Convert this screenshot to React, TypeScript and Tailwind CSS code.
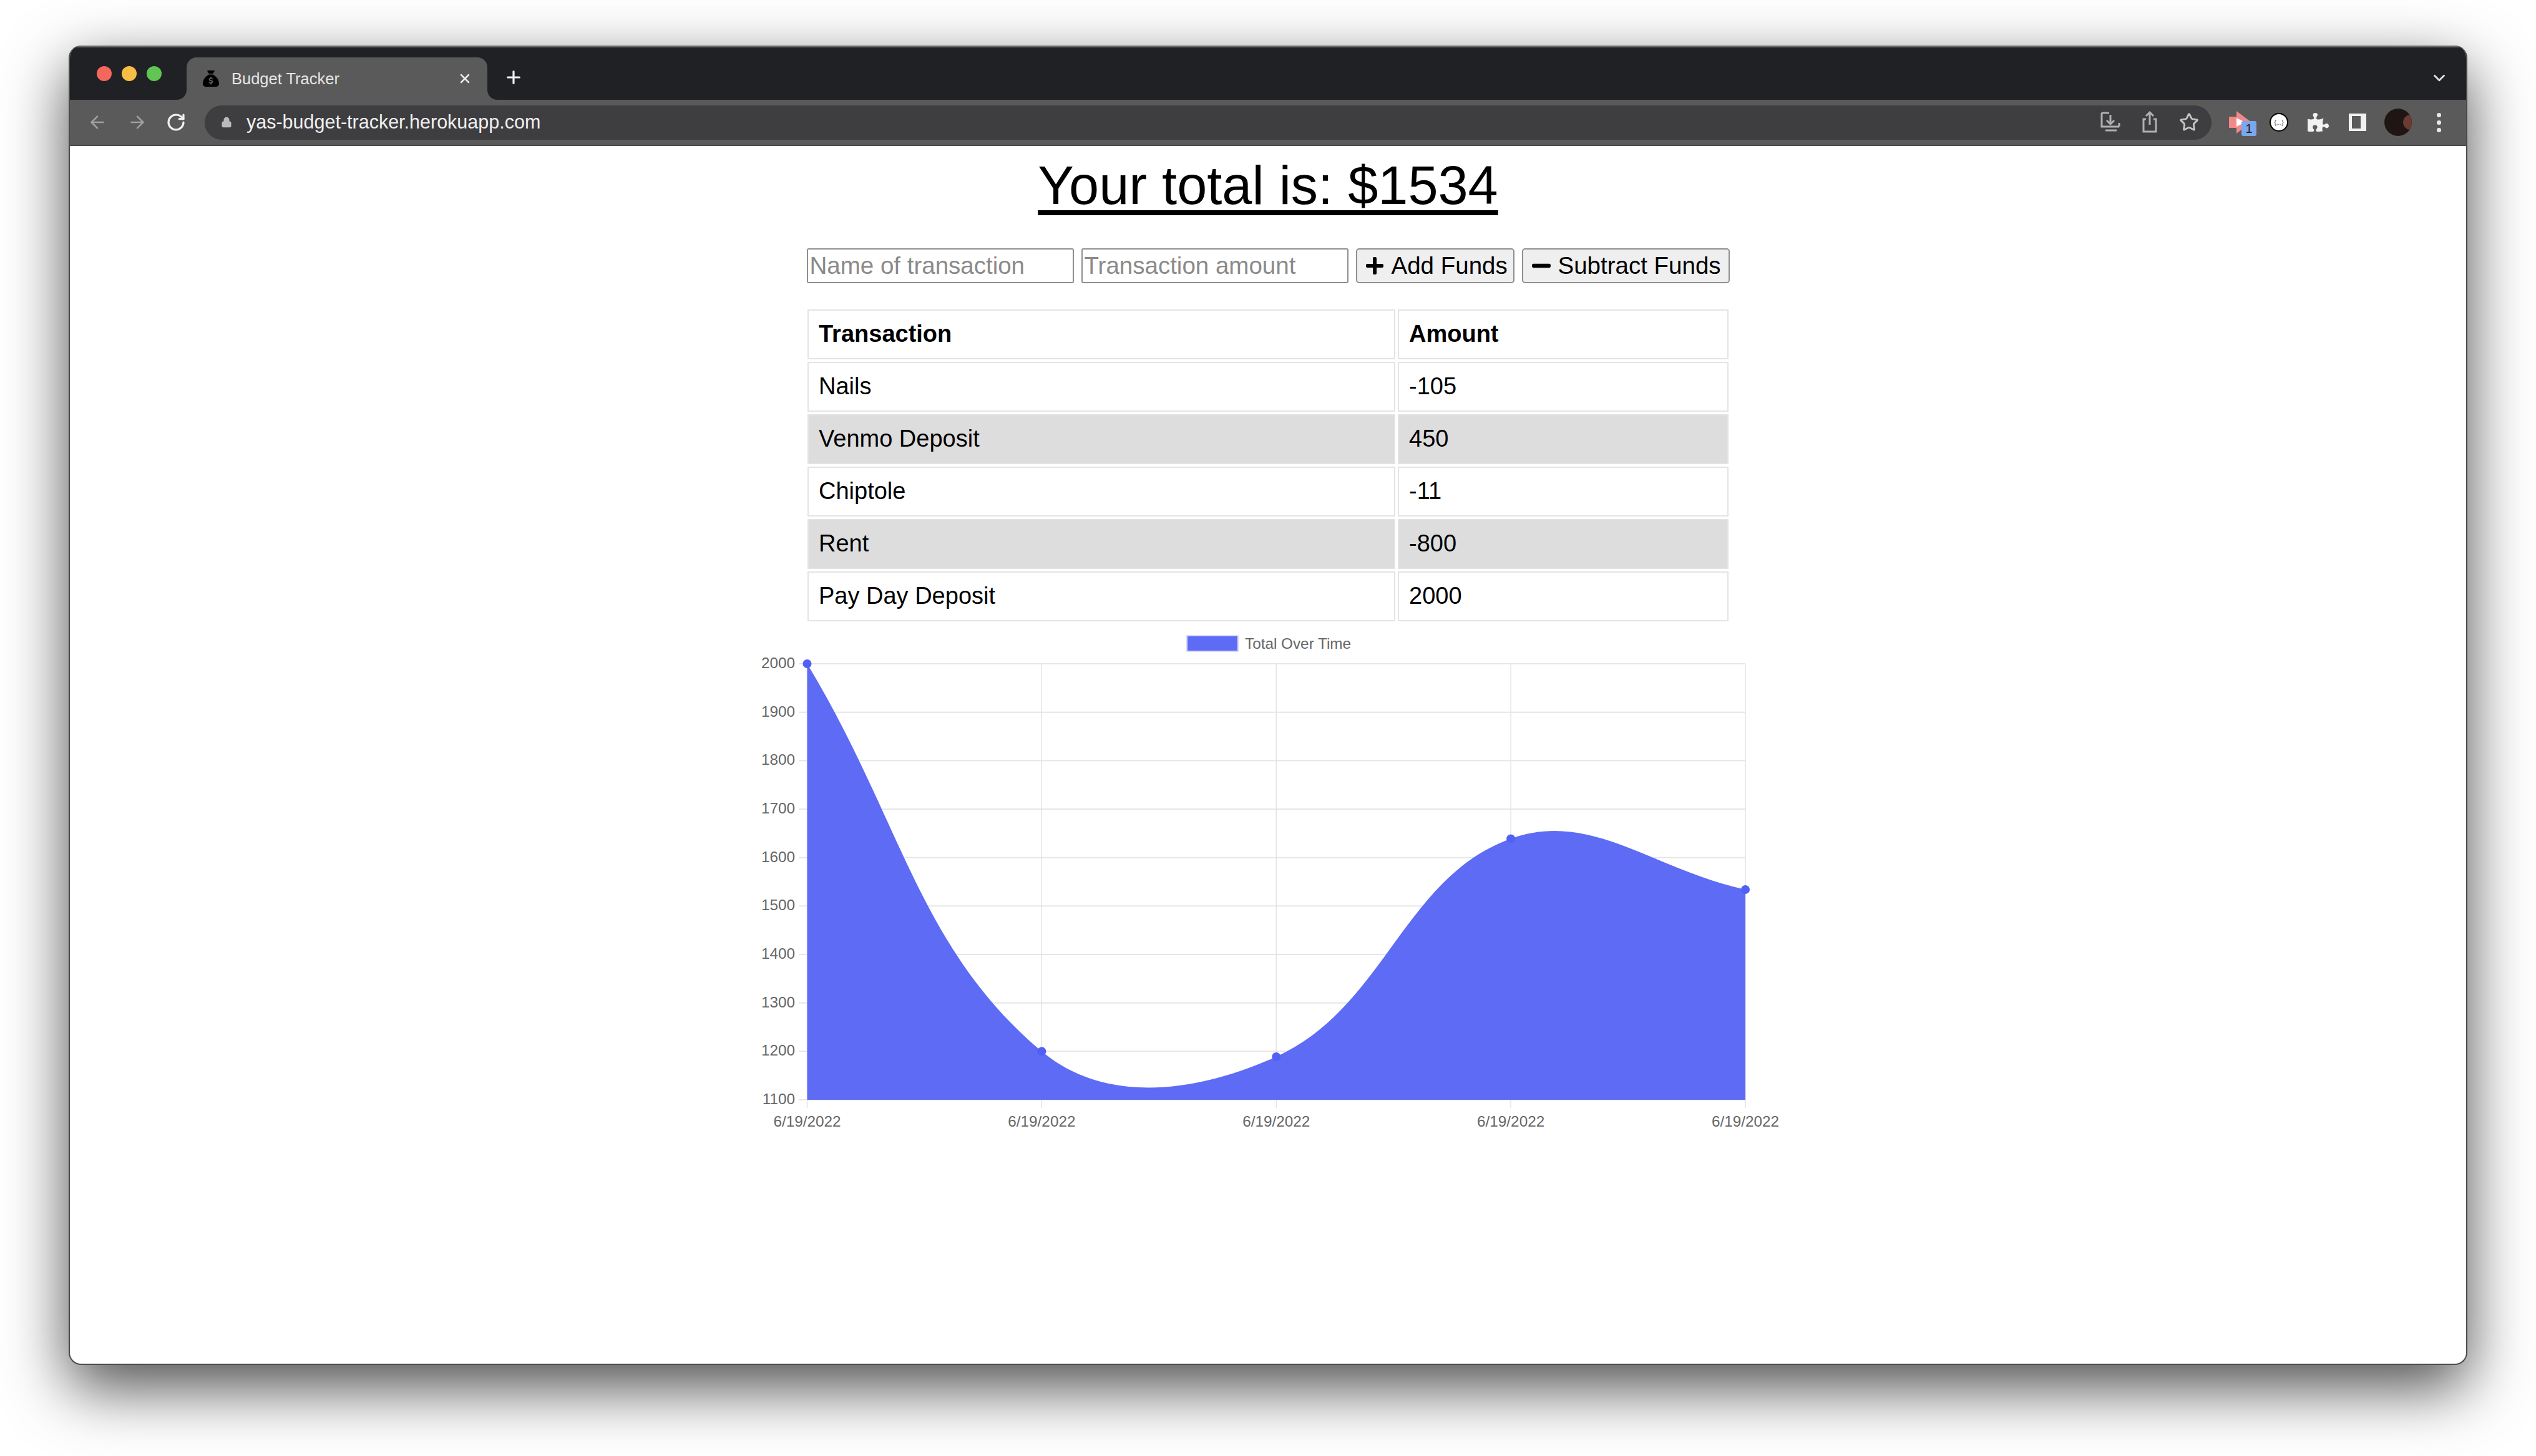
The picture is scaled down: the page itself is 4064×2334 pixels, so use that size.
import { ArrowLeft, ArrowRight, ChevronDown, Lock, Plus, RotateCw, Star, X } from "lucide-react";
import { FaMinus, FaPlus, FaPuzzlePiece } from "react-icons/fa";
import { FaSackDollar } from "react-icons/fa6";

const rows = [
    { name: "Nails", amount: "-105", shaded: false },
    { name: "Venmo Deposit", amount: "450", shaded: true },
    { name: "Chiptole", amount: "-11", shaded: false },
    { name: "Rent", amount: "-800", shaded: true },
    { name: "Pay Day Deposit", amount: "2000", shaded: false },
];

// chart coordinates are page pixels, see the viewBox on the svg
const plot = { left: 1293.5, right: 2797, top: 1064, bottom: 1763 };
const yTicks = [2000, 1900, 1800, 1700, 1600, 1500, 1400, 1300, 1200, 1100];
const xTicks = [0, 1, 2, 3, 4].map((i) => plot.left + (i * (plot.right - plot.left)) / 4);
const values = [2000, 1200, 1189, 1639, 1534];

const yFor = (v: number) => plot.top + ((2000 - v) / 900) * (plot.bottom - plot.top);
const points = values.map((v, i) => ({ x: xTicks[i], y: yFor(v) }));

// same spline chart.js draws with tension 0.4
function areaPath() {
    const t = 0.4;
    const cps = points.map((cur, i) => {
        const prev = points[i - 1] ?? cur;
        const next = points[i + 1] ?? cur;
        const d01 = Math.hypot(cur.x - prev.x, cur.y - prev.y);
        const d12 = Math.hypot(next.x - cur.x, next.y - cur.y);
        const total = d01 + d12;
        const fa = (t * d01) / total;
        const fb = (t * d12) / total;
        return {
            px: cur.x - fa * (next.x - prev.x),
            py: cur.y - fa * (next.y - prev.y),
            nx: cur.x + fb * (next.x - prev.x),
            ny: cur.y + fb * (next.y - prev.y),
        };
    });
    let d = `M${points[0].x} ${points[0].y}`;
    for (let i = 1; i < points.length; i++) {
        d += ` C${cps[i - 1].nx} ${cps[i - 1].ny} ${cps[i].px} ${cps[i].py} ${points[i].x} ${points[i].y}`;
    }
    return `${d} L${plot.right} ${plot.bottom} L${plot.left} ${plot.bottom} Z`;
}

function Chart() {
    return (
        <svg viewBox="1182 1000 1700 830" className="w-[1700px] h-[830px] shrink-0" fontFamily="'Liberation Sans', Arial, sans-serif" fontSize="24.3" fill="#666666">
            <rect x="1902" y="1019" width="82" height="25" fill="#5e6bf5" stroke="#d9dcfb" strokeWidth="2" />
            <text x="1995" y="1040">Total Over Time</text>
            {yTicks.map((tick) => (
                <g key={tick}>
                    <line x1="1280" x2={plot.right} y1={yFor(tick)} y2={yFor(tick)} stroke="#e6e6e6" strokeWidth="2" />
                    <text x="1274" y={yFor(tick) + 7} textAnchor="end">{tick}</text>
                </g>
            ))}
            {xTicks.map((x) => (
                <g key={x}>
                    <line x1={x} x2={x} y1={plot.top} y2="1776" stroke="#e3e3e3" strokeWidth="1.5" />
                    <text x={x} y="1806" textAnchor="middle">6/19/2022</text>
                </g>
            ))}
            <path d={areaPath()} fill="#5e6bf5" />
            {points.map((p) => (
                <circle key={p.x} cx={p.x} cy={p.y} r="7" fill="#5161f3" />
            ))}
        </svg>
    );
}

function TabCorner({ flip }: { flip?: boolean }) {
    return (
        <svg viewBox="0 0 16 16" className={flip ? "absolute bottom-0 -right-[16px] w-[16px] h-[16px] -scale-x-100" : "absolute bottom-0 -left-[16px] w-[16px] h-[16px]"}>
            <path d="M16 0v16H0c9 0 16-7 16-16z" fill="#5a5a5a" />
        </svg>
    );
}

function BrowserChrome() {
    return (
        <div className="shrink-0 font-['Liberation_Sans',Arial,sans-serif]">
            <div className="h-[87px] bg-[#202124] border-t-[3px] border-[#6a6a6a] flex items-end pl-[43px]">
                <div className="flex gap-[16px] self-start mt-[30px]">
                    <span className="w-[24px] h-[24px] rounded-full bg-[#f4675c]" />
                    <span className="w-[24px] h-[24px] rounded-full bg-[#f8bd45]" />
                    <span className="w-[24px] h-[24px] rounded-full bg-[#5fc653]" />
                </div>
                <div className="relative ml-[40px] w-[482px] h-[68px] bg-[#5a5a5a] rounded-t-[16px] flex items-center pl-[26px] pr-[24px]">
                    <TabCorner />
                    <TabCorner flip />
                    <FaSackDollar className="w-[26px] h-[34px] text-black" />
                    <span className="ml-[20px] flex-1 text-[25.5px] text-[#e6e6e6]">Budget Tracker</span>
                    <X className="w-[24px] h-[24px] text-[#e8e8e8]" strokeWidth={2.5} />
                </div>
                <Plus className="ml-[26px] mb-[20px] w-[32px] h-[32px] text-[#f1f1f1]" strokeWidth={2.4} />
                <ChevronDown className="ml-auto mr-[28px] mb-[20px] w-[30px] h-[30px] text-[#dddddd]" strokeWidth={2.4} />
            </div>
            <div className="h-[74px] bg-[#5a5a5a] border-b-[2px] border-[#4a4a4a] flex items-center pl-[28px]">
                <ArrowLeft className="w-[32px] h-[32px] text-[#a0a0a0]" strokeWidth={2} />
                <ArrowRight className="ml-[32px] w-[32px] h-[32px] text-[#a0a0a0]" strokeWidth={2} />
                <RotateCw className="ml-[30px] w-[32px] h-[32px] text-[#f1f1f1]" strokeWidth={2.4} />
                <div className="ml-[30px] w-[3216px] h-[55px] rounded-full bg-[#3e3d40] flex items-center pl-[26px]">
                    <Lock className="w-[18px] h-[22px] text-[#b8babd]" fill="#b8babd" strokeWidth={2} />
                    <span className="ml-[23px] text-[30.5px] text-[#f0f0f0]">yas-budget-tracker.herokuapp.com</span>
                    <div className="ml-auto mr-[20px] flex items-center gap-[34px]">
                        <svg viewBox="0 0 32 36" className="w-[32px] h-[36px]" fill="none" stroke="#b0b0b0" strokeWidth="3">
                            <path d="M14 3H4a2 2 0 0 0-2 2v20h28M30 25v-6M16 6v14M10 15l6 6 6-6M8 31h18" />
                        </svg>
                        <svg viewBox="0 0 26 36" className="w-[26px] h-[36px]" fill="none" stroke="#b0b0b0" strokeWidth="3">
                            <path d="M7 13H3v20h20V13h-4M13 22V3M7 8l6-6 6 6" />
                        </svg>
                        <Star className="w-[32px] h-[32px] text-[#c4c4c4]" strokeWidth={2.2} />
                    </div>
                </div>
                <div className="ml-[28px] flex items-center">
                    <div className="relative w-[36px] h-[36px]">
                        <svg viewBox="0 0 36 36" className="w-[36px] h-[36px]">
                            <path d="M0 9h12V0l24 18-24 18V27H0z" fill="#f28888" />
                            <path d="M12 11l14 7-14 7z" fill="#ffffff" />
                        </svg>
                        <span className="absolute left-[20px] top-[16px] w-[24px] h-[24px] rounded-[3px] bg-[#7aa7ee] text-[20px] leading-[24px] text-center text-[#222222]">1</span>
                    </div>
                    <span className="ml-[29px] w-[30px] h-[30px] rounded-full bg-white border-[2px] border-black flex items-center justify-center text-[10px] text-[#555555]">{"{...}"}</span>
                    <FaPuzzlePiece className="ml-[31px] w-[34px] h-[34px] text-[#f1f1f1]" />
                    <span className="ml-[32px] w-[28px] h-[28px] bg-[#f1f1f1] pl-[5px] py-[4px] pr-[9px]">
                        <span className="block w-full h-full bg-[#5a5a5a]" />
                    </span>
                    <span className="ml-[29px] w-[44px] h-[44px] rounded-full overflow-hidden bg-[#1f1614] flex items-center justify-end">
                        <span className="w-[14px] h-[24px] rounded-l-full bg-[#6b3a30]" />
                    </span>
                    <div className="ml-[40px] flex flex-col gap-[5px]">
                        <span className="w-[7px] h-[7px] rounded-full bg-[#e8e8e8]" />
                        <span className="w-[7px] h-[7px] rounded-full bg-[#e8e8e8]" />
                        <span className="w-[7px] h-[7px] rounded-full bg-[#e8e8e8]" />
                    </div>
                </div>
            </div>
        </div>
    );
}

export default function App() {
    return (
        <div className="w-[4064px] h-[2334px] bg-white pt-[73px] pl-[110px] overflow-hidden">
            <div className="w-[3844px] h-[2115px] flex flex-col bg-white rounded-[20px] overflow-hidden border-x-[2px] border-b-[2px] border-[#4a4a4a] shadow-[0_36px_100px_rgba(0,0,0,0.7)]">
                <BrowserChrome />
                <main className="flex-1 flex flex-col items-center text-black font-['Liberation_Sans',Arial,sans-serif]">
                    <h1 className="mt-[15px] text-[86.5px] leading-[96px] underline decoration-[8px] underline-offset-[10px]">Your total is: $1534</h1>
                    <div className="mt-[53px] flex gap-[12px] text-[38.5px]">
                        <input placeholder="Name of transaction" className="w-[428px] h-[56px] px-[3px] border-[2px] border-[#8f8f8f] rounded-[3px] placeholder:text-[#8a8a8a] bg-white" />
                        <input placeholder="Transaction amount" className="w-[428px] h-[56px] px-[3px] border-[2px] border-[#8f8f8f] rounded-[3px] placeholder:text-[#8a8a8a] bg-white" />
                        <button className="w-[254px] h-[56px] pl-[12px] flex items-center gap-[11px] bg-[#efefef] border-[2px] border-[#8f8f8f] rounded-[5px] whitespace-nowrap">
                            <FaPlus className="w-[32px] h-[32px]" />
                            Add Funds
                        </button>
                        <button className="w-[333px] h-[56px] pl-[12px] flex items-center gap-[10px] bg-[#efefef] border-[2px] border-[#8f8f8f] rounded-[5px] whitespace-nowrap">
                            <FaMinus className="w-[34px] h-[34px]" />
                            Subtract Funds
                        </button>
                    </div>
                    <table className="mt-[38px] w-[1484px] border-separate border-spacing-[4px] table-fixed text-[38px] text-left">
                        <thead>
                            <tr>
                                <th className="w-[942px] h-[80px] pl-[16px] pb-[2px] border-[2px] border-[#e4e4e4] font-bold">Transaction</th>
                                <th className="h-[80px] pl-[16px] pb-[2px] border-[2px] border-[#e4e4e4] font-bold">Amount</th>
                            </tr>
                        </thead>
                        <tbody>
                            {rows.map((row) => (
                                <tr key={row.name}>
                                    <td className={row.shaded ? "h-[80px] pl-[16px] pb-[2px] border-[2px] border-[#e4e4e4] bg-[#dddddd]" : "h-[80px] pl-[16px] pb-[2px] border-[2px] border-[#e4e4e4]"}>{row.name}</td>
                                    <td className={row.shaded ? "h-[80px] pl-[16px] pb-[2px] border-[2px] border-[#e4e4e4] bg-[#dddddd]" : "h-[80px] pl-[16px] pb-[2px] border-[2px] border-[#e4e4e4]"}>{row.amount}</td>
                                </tr>
                            ))}
                        </tbody>
                    </table>
                    <Chart />
                </main>
            </div>
        </div>
    );
}
